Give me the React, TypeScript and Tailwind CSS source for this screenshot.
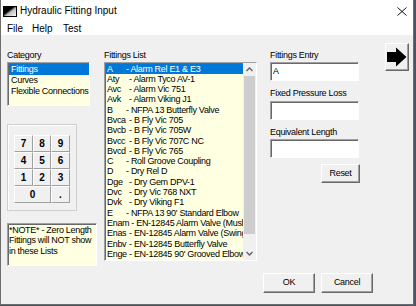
import React from "react";

const sunken =
  "border border-t-[#a0a0a0] border-l-[#a0a0a0] border-b-white border-r-white shadow-[inset_1px_1px_0_#696969]";
const raised =
  "border border-t-white border-l-white border-r-[#696969] border-b-[#696969] shadow-[inset_-1px_-1px_0_#a0a0a0] bg-[#f0f0f0]";
const keyBtn =
  "flex items-center justify-center border border-t-white border-l-white border-r-[#a0a0a0] border-b-[#a0a0a0] bg-[#f0f0f0] text-[10px] font-bold leading-none";
const label = "h-[11px] leading-[11px] text-[9px] tracking-[-0.3px] whitespace-nowrap";

const fittings: [string, string][] = [
  ["A", "Alarm Rel E1 & E3"],
  ["Aty", "Alarm Tyco AV-1"],
  ["Avc", "Alarm Vic 751"],
  ["Avk", "Alarm Viking J1"],
  ["B", "NFPA 13 Butterfly Valve"],
  ["Bvca", "B Fly Vic 705"],
  ["Bvcb", "B Fly Vic 705W"],
  ["Bvcc", "B Fly Vic 707C NC"],
  ["Bvcd", "B Fly Vic 765"],
  ["C", "Roll Groove Coupling"],
  ["D", "Dry Rel D"],
  ["Dge", "Dry Gem DPV-1"],
  ["Dvc", "Dry Vic 768 NXT"],
  ["Dvk", "Dry Viking F1"],
  ["E", "NFPA 13 90' Standard Elbow"],
  ["Enam", "EN-12845 Alarm Valve (Mushroom)"],
  ["Enas", "EN-12845 Alarm Valve (Swing Check)"],
  ["Enbv", "EN-12845 Butterfly Valve"],
  ["Enge", "EN-12845 90' Grooved Elbow"],
];

function Chevron({ up }: { up?: boolean }) {
  return (
    <svg width="7" height="5" viewBox="0 0 7 5">
      <polyline
        points={up ? "0.5,4 3.5,1 6.5,4" : "0.5,1 3.5,4 6.5,1"}
        fill="none"
        stroke="#606060"
        strokeWidth="1.3"
      />
    </svg>
  );
}

export default function App() {
  return (
    <div className="w-[416px] h-[306px] bg-[#4a5563] overflow-hidden font-['Liberation_Sans',Arial,sans-serif] text-black">
      <div className="w-[414px] h-[305px] flex flex-col border border-t-0 border-[#6d6d6d] bg-[#f0f0f0]">
        {/* Title bar */}
        <div className="h-[22px] bg-white flex items-center">
          <svg className="ml-[2px]" width="14" height="11" viewBox="0 0 14 11">
            <defs>
              <linearGradient id="ig" x1="0" y1="0" x2="1" y2="1">
                <stop offset="0.4" stopColor="#000" />
                <stop offset="0.55" stopColor="#bdbdbd" />
                <stop offset="1" stopColor="#fff" />
              </linearGradient>
            </defs>
            <rect x="0.5" y="0.5" width="13" height="10" fill="url(#ig)" stroke="#000" />
          </svg>
          <span className="ml-[3px] text-[10px] leading-none whitespace-nowrap">Hydraulic Fitting Input</span>
          <div className="flex-1" />
          <svg className="mr-[6px]" width="10" height="9" viewBox="0 0 10 9">
            <path d="M0.5 0.5 L9.5 8.5 M9.5 0.5 L0.5 8.5" stroke="#111" strokeWidth="1" />
          </svg>
        </div>
        {/* Menu bar */}
        <div className="h-[13px] bg-white flex items-center pl-[6px] text-[10px] leading-none">
          <span className="w-[25px]">File</span>
          <span className="w-[31px]">Help</span>
          <span>Test</span>
        </div>

        {/* Body */}
        <div className="flex-1 flex flex-col">
          <div className="flex items-start pt-[8px] pl-[6px]">
            {/* Left column */}
            <div className="w-[90px] mt-[7px] flex flex-col">
              <div className={label + " mb-[1px]"}>Category</div>
              <div className={sunken + " w-[83px] h-[44px] bg-[#ffffe1] pt-[1px] pl-[1px] text-[9px] tracking-[-0.3px]"}>
                <div className="h-[10.8px] leading-[10.8px] bg-[#0078d7] text-white pl-[2px]">Fittings</div>
                <div className="h-[10.8px] leading-[10.8px] pl-[2px]">Curves</div>
                <div className="h-[10.8px] leading-[10.8px] pl-[2px] whitespace-nowrap">Flexible Connections</div>
              </div>
              <div className="mt-[18px] w-[70px] h-[87px] border border-[#cfcfcf] shadow-[inset_1px_1px_0_white] pt-[10px] pl-[6px]">
                <div className="grid grid-cols-[19px_18px_19px] grid-rows-[17px_17px_17px_17px]">
                  {["7", "8", "9", "4", "5", "6", "1", "2", "3"].map((d) => (
                    <div key={d} className={keyBtn}>
                      {d}
                    </div>
                  ))}
                  <div className={keyBtn + " col-span-2"}>0</div>
                  <div className={keyBtn}>.</div>
                </div>
              </div>
              <div className={sunken + " mt-[12px] w-[90px] h-[43px] bg-[#ffffe1] pl-[1px] pt-[0.5px] text-[9px] tracking-[-0.3px] leading-[10.5px] whitespace-nowrap"}>
                <div>*NOTE* - Zero Length</div>
                <div>Fittings will NOT show</div>
                <div>in these Lists</div>
              </div>
            </div>

            {/* Middle column */}
            <div className="ml-[7px] w-[153px] mt-[7px] flex flex-col">
              <div className={label + " mb-[1px]"}>Fittings List</div>
              <div className={sunken + " w-[153px] h-[199px] bg-[#ffffe1] flex"}>
                <div className="flex-1 overflow-hidden pt-[0.5px] pl-[1px] text-[9px] tracking-[-0.3px]">
                  {fittings.map(([code, name], i) => (
                    <div
                      key={code}
                      className={
                        "h-[10.3px] leading-[10.3px] flex whitespace-nowrap pl-[1px] " +
                        (i === 0 ? "bg-[#0078d7] text-white" : "")
                      }
                    >
                      <span className={code.length === 1 ? "min-w-[19px] shrink-0" : "min-w-[22px] pr-[2px] shrink-0"}>{code}</span>
                      <span>- {name}</span>
                    </div>
                  ))}
                </div>
                <div className="w-[13px] bg-[#f0f0f0] flex flex-col">
                  <div className="h-[13px] flex items-center justify-center">
                    <Chevron up />
                  </div>
                  <div className="mx-[1px] h-[158px] bg-[#cdcdcd]" />
                  <div className="flex-1" />
                  <div className="h-[13px] flex items-center justify-center">
                    <Chevron />
                  </div>
                </div>
              </div>
            </div>

            {/* Right column */}
            <div className="ml-[13px] w-[90px] mt-[7px] flex flex-col">
              <div className={label + " mb-[1px]"}>Fittings Entry</div>
              <div className={sunken + " w-[89px] h-[19px] bg-white pl-[2px] text-[9px] leading-[17px]"}>A</div>
              <div className={label + " mt-[7px] mb-[2px]"}>Fixed Pressure Loss</div>
              <div className={sunken + " w-[89px] h-[19px] bg-white"} />
              <div className={label + " mt-[7px] mb-[1px]"}>Equivalent Length</div>
              <div className={sunken + " w-[89px] h-[19px] bg-white"} />
              <div className="flex justify-end mt-[6px]">
                <div className={raised + " w-[39px] h-[19px] flex items-center justify-center text-[9px] tracking-[-0.3px]"}>
                  Reset
                </div>
              </div>
            </div>

            {/* Arrow button */}
            <div className={raised + " ml-[25px] w-[24px] h-[28px] flex items-center justify-center"}>
              <svg width="22" height="24" viewBox="0 0 22 24">
                <polygon points="1,7 10,7 10,2.5 20.5,12 10,21.5 10,17 1,17" fill="#000" />
              </svg>
            </div>
          </div>

          <div className="flex-1" />
          {/* Bottom buttons */}
          <div className="flex justify-end gap-[6px] pr-[40px] pb-[11px]">
            <div className={raised + " w-[52px] h-[20px] flex items-center justify-center text-[9px] tracking-[-0.3px]"}>OK</div>
            <div className={raised + " w-[52px] h-[20px] flex items-center justify-center text-[9px] tracking-[-0.3px]"}>Cancel</div>
          </div>
        </div>
      </div>
    </div>
  );
}
